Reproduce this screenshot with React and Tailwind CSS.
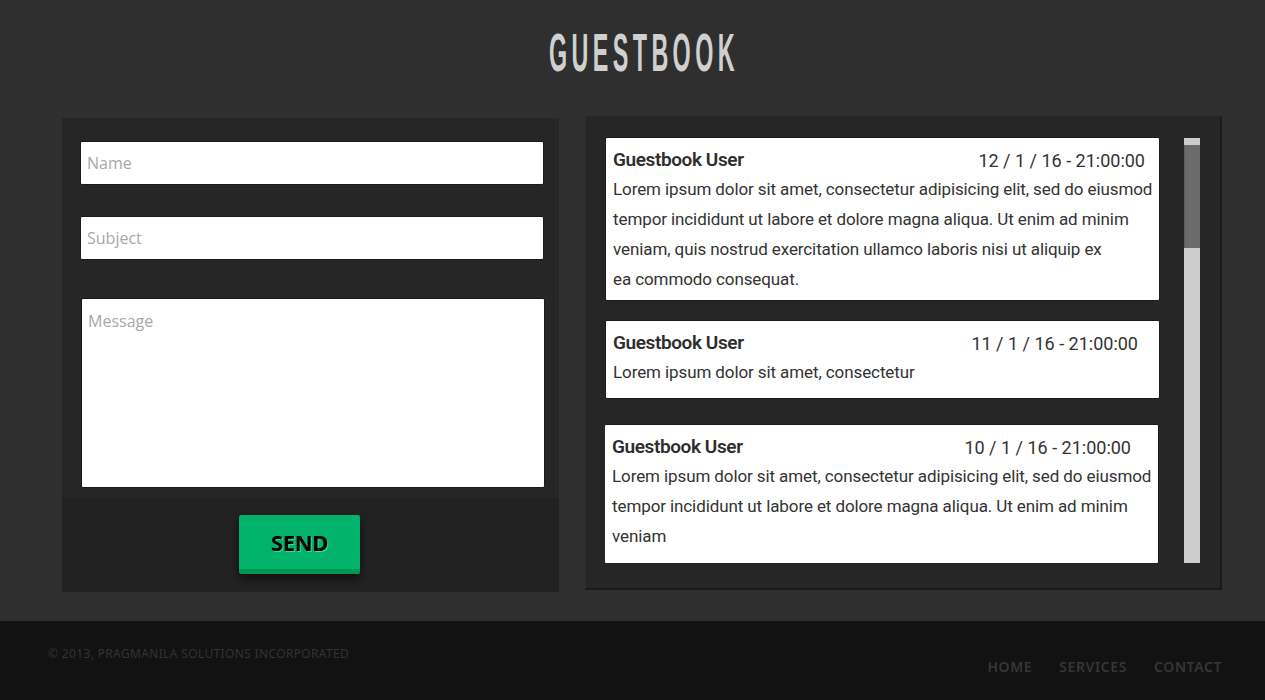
import React from 'react';

const entries = [
  {
    date: '12 / 1 / 16 - 21:00:00',
    lines: [
      'Lorem ipsum dolor sit amet, consectetur adipisicing elit, sed do eiusmod',
      'tempor incididunt ut labore et dolore magna aliqua. Ut enim ad minim',
      'veniam, quis nostrud exercitation ullamco laboris nisi ut aliquip ex',
      'ea commodo consequat.',
    ],
    card: 'mb-[19px] pt-[8px] pb-[6px]',
    datePad: 'pr-[8px]',
  },
  {
    date: '11 / 1 / 16 - 21:00:00',
    lines: ['Lorem ipsum dolor sit amet, consectetur'],
    card: 'mb-[25px] pt-[8px] pb-[11px]',
    datePad: 'pr-[15px]',
  },
  {
    date: '10 / 1 / 16 - 21:00:00',
    lines: [
      'Lorem ipsum dolor sit amet, consectetur adipisicing elit, sed do eiusmod',
      'tempor incididunt ut labore et dolore magna aliqua. Ut enim ad minim',
      'veniam',
    ],
    card: 'mb-[20px] pt-[8px] pb-[12px] -ml-px',
    datePad: 'pr-[21px]',
  },
];

const inputClass =
  'block w-[464px] bg-white rounded-[2px] border border-[#1a1a1a] px-[6px] text-[16px] text-[#333] placeholder:text-[#a8a8a8] outline-none';

function EntryCard({ entry }) {
  return (
    <div
      className={`w-[555px] bg-white border border-[#1c1c1c] rounded-[2px] pl-[7px] pr-[6px] text-[#333] ${entry.card}`}
    >
      <div className="flex justify-between items-center h-[28px]">
        <span className="font-semibold text-[19px] tracking-[-0.4px] text-[#2e2e2e]">Guestbook User</span>
        <span className={`text-[18px] text-[#333] ${entry.datePad}`}>{entry.date}</span>
      </div>
      <div className="text-[17px] leading-[30px] tracking-[-0.1px]">
        {entry.lines.map((l, i) => (
          <div key={i} className="whitespace-nowrap">
            {l}
          </div>
        ))}
      </div>
    </div>
  );
}

export default function App() {
  return (
    <div
      className="min-h-[700px] bg-[#2f2f2f] flex flex-col"
      style={{ fontFamily: '"Open Sans", "Noto Sans", sans-serif' }}
    >
      <header className="h-[116px] flex justify-center pt-[23px] pl-[19px]">
        <h1
          className="h-[60px] inline-block origin-center scale-x-[0.44] text-[#d0d0d0] text-[53px] leading-[60px] font-bold tracking-[10px] pl-[10px]"
          style={{ fontFamily: '"Liberation Sans Narrow", "Liberation Sans", sans-serif' }}
        >
          GUESTBOOK
        </h1>
      </header>

      <main className="flex items-start pl-[62px] gap-[26px]">
        {/* form panel */}
        <section className="w-[497px] h-[474px] mt-[2px] bg-[#262626] flex flex-col">
          <div className="pt-[23px] pl-[18px] pb-[10px]">
            <input className={`${inputClass} h-[44px]`} placeholder="Name" />
            <input className={`${inputClass} h-[44px] mt-[31px]`} placeholder="Subject" />
            <textarea
              className={`${inputClass} h-[190px] mt-[38px] pt-[10px] resize-none w-[463px] ml-px`}
              placeholder="Message"
            />
          </div>
          <div className="flex-1 bg-[#222222] pt-[17px] pl-[177px]">
            <button
              className="w-[121px] h-[59px] rounded-[2px] bg-[#00b26a] border-b-[5px] border-[#00964f] shadow-[0_5px_10px_rgba(0,0,0,0.55)] text-black text-[22px] font-bold tracking-[-0.3px] [text-shadow:1px_1px_0_#3fd892]"
              style={{ fontFamily: '"Noto Sans", "Open Sans", sans-serif' }}
            >
              SEND
            </button>
          </div>
        </section>

        {/* entries panel */}
        <section className="w-[637px] h-[474px] bg-[#262626] border-b-2 border-r-2 border-[#1a1a1a] shadow-[inset_1px_0_0_#2c2c2c] flex pt-[21px] pl-[20px]">
          <div
            className="w-[555px] h-[426px] overflow-hidden"
            style={{ fontFamily: '"Roboto", "Liberation Sans", sans-serif' }}
          >
            {entries.map((e, i) => (
              <EntryCard key={i} entry={e} />
            ))}
          </div>
          <div className="ml-[24px] mt-px w-[16px] h-[425px] bg-[#cccccc] pt-[7px]">
            <div className="h-[103px] w-full bg-[#6b6b6b] border-l border-[#5c5c5c]" />
          </div>
        </section>
      </main>

      <footer
        className="mt-[29px] h-[79px] bg-[#121212] flex justify-between pl-[48px] pr-[43px]"
        style={{ fontFamily: '"Noto Sans", "Open Sans", sans-serif' }}
      >
        <p className="pt-[24px] text-[12px] uppercase text-[#333333] tracking-[0.35px]">
          © 2013, Pragmanila Solutions Incorporated
        </p>
        <nav className="flex gap-[27px] pt-[35px] text-[14px] uppercase text-[#363636] font-semibold tracking-[0.6px]">
          <a href="#">Home</a>
          <a href="#">Services</a>
          <a href="#">Contact</a>
        </nav>
      </footer>
    </div>
  );
}
